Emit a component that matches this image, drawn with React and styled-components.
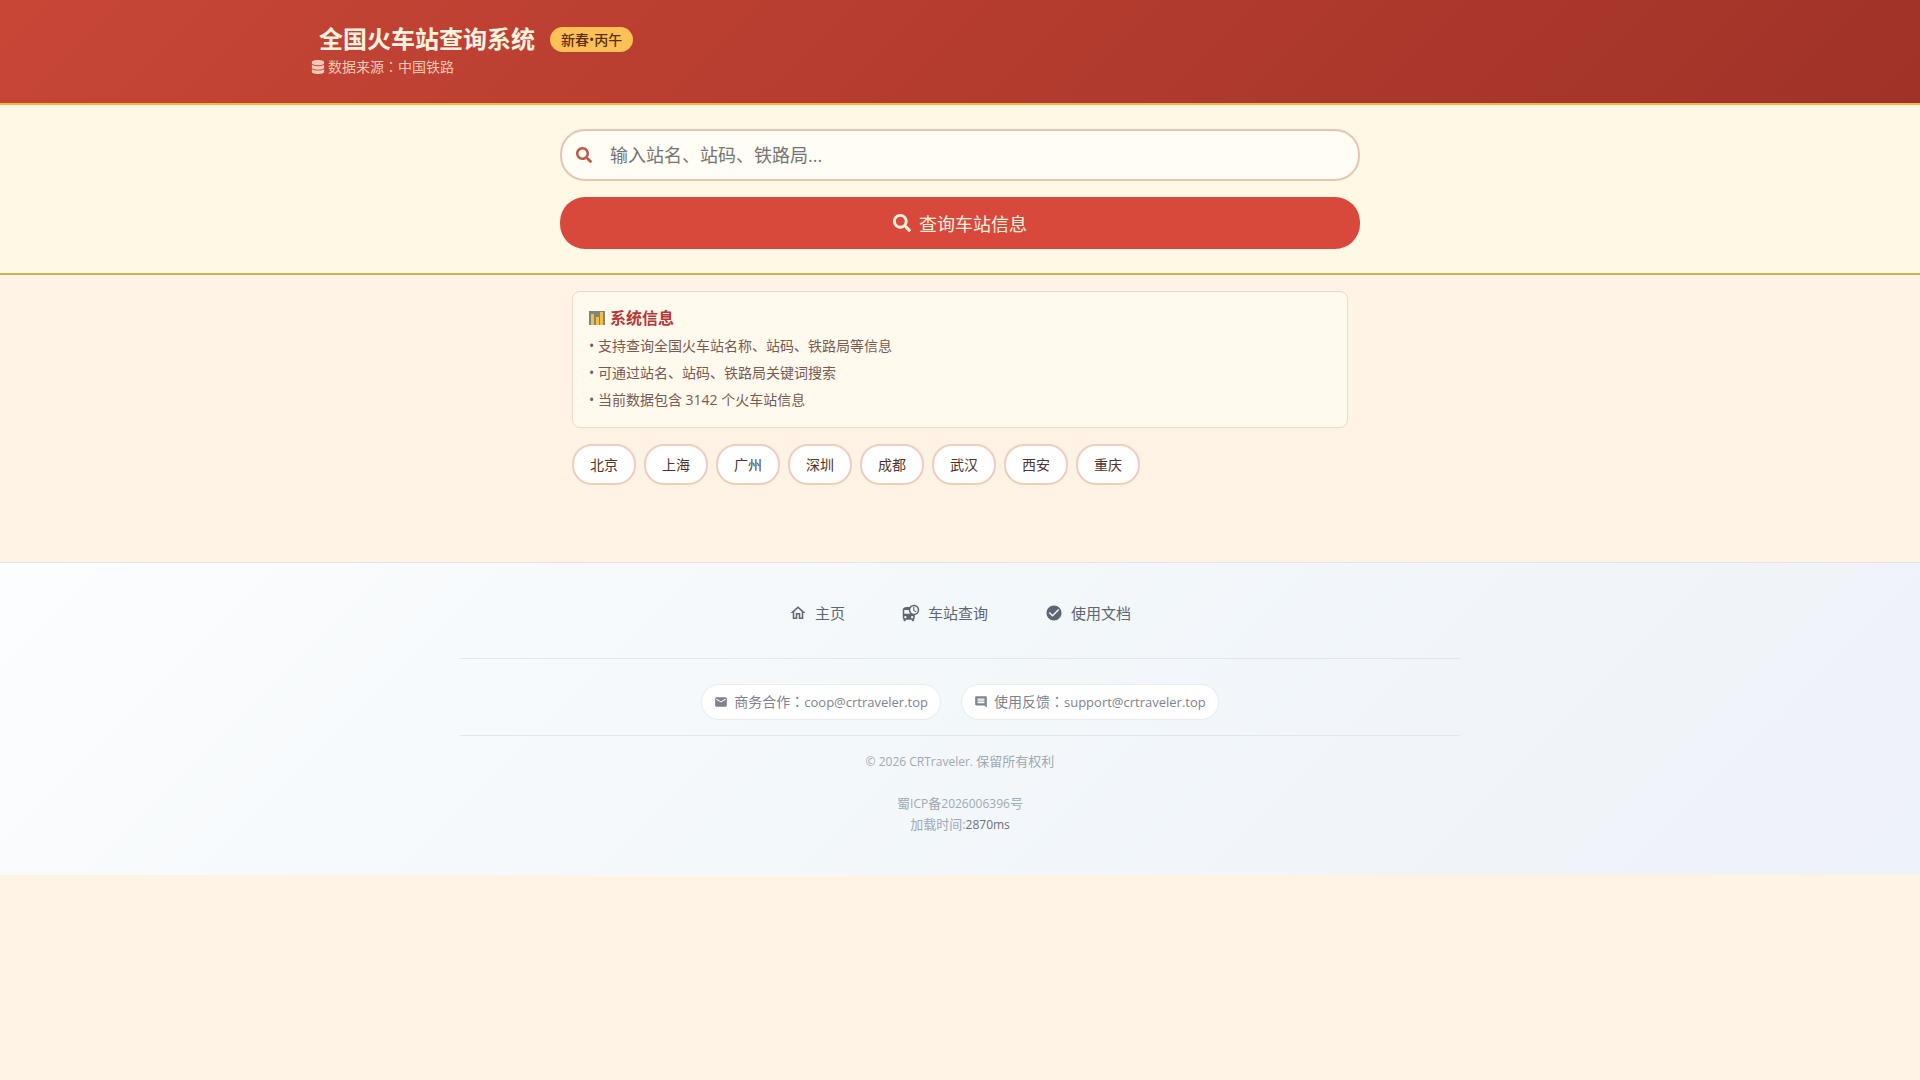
import React from "react";
import styled, { createGlobalStyle } from "styled-components";
import { FaDatabase, FaSearch } from "react-icons/fa";
import {
  MdCheckCircle,
  MdDepartureBoard,
  MdEmail,
  MdInsertComment,
  MdOutlineHome,
} from "react-icons/md";

const cities = ["北京", "上海", "广州", "深圳", "成都", "武汉", "西安", "重庆"];

const tips = [
  "支持查询全国火车站名称、站码、铁路局等信息",
  "可通过站名、站码、铁路局关键词搜索",
  "当前数据包含 3142 个火车站信息",
];

const links = [
  { label: "主页", icon: MdOutlineHome },
  { label: "车站查询", icon: MdDepartureBoard },
  { label: "使用文档", icon: MdCheckCircle },
];

const contacts = [
  { label: "商务合作", mail: "coop@crtraveler.top", icon: MdEmail },
  { label: "使用反馈", mail: "support@crtraveler.top", icon: MdInsertComment },
];

function ChartIcon() {
  return (
    <svg width="16" height="14" viewBox="0 0 16 14" aria-hidden="true">
      <rect width="16" height="14" fill="#84857a" />
      <rect x="2" y="3" width="3" height="11" fill="#f0c040" />
      <rect x="7" y="6" width="3" height="8" fill="#f0c040" />
      <rect x="11" y="1" width="3" height="13" fill="#f0c040" />
    </svg>
  );
}

function App() {
  return (
    <>
      <GlobalStyle />
      <Header>
        <HeaderInner>
          <TitleRow>
            <Title>全国火车站查询系统</Title>
            <Badge>新春•丙午</Badge>
          </TitleRow>
          <Source>
            <FaDatabase size={14} />
            <span>
              数据来源<Colon>：</Colon>中国铁路
            </span>
          </Source>
        </HeaderInner>
      </Header>

      <SearchSection>
        <SearchForm onSubmit={(e) => e.preventDefault()}>
          <SearchBox>
            <FaSearch size={16} />
            <SearchInput
              type="text"
              aria-label="车站搜索"
              placeholder="输入站名、站码、铁路局..."
            />
          </SearchBox>
          <SearchButton type="submit">
            <FaSearch size={18} />
            查询车站信息
          </SearchButton>
        </SearchForm>
      </SearchSection>

      <Main>
        <InfoCard>
          <InfoTitle>
            <ChartIcon />
            系统信息
          </InfoTitle>
          {tips.map((tip) => (
            <InfoLine key={tip}>• {tip}</InfoLine>
          ))}
        </InfoCard>
        <CityList>
          {cities.map((city) => (
            <CityButton key={city} type="button">
              {city}
            </CityButton>
          ))}
        </CityList>
      </Main>

      <Footer>
        <FooterInner>
          <FooterNav>
            {links.map(({ label, icon: Icon }) => (
              <NavLink key={label} href="#">
                <Icon size={18} />
                {label}
              </NavLink>
            ))}
          </FooterNav>
          <Contacts>
            {contacts.map(({ label, mail, icon: Icon }) => (
              <ContactLink key={mail} href={`mailto:${mail}`}>
                <Icon size={14} />
                <span>
                  {label}
                  <Colon>：</Colon>
                  <Mail>{mail}</Mail>
                </span>
              </ContactLink>
            ))}
          </Contacts>
          <Legal>
            <LegalLine>
              <Latin>© 2026 CRTraveler.</Latin> 保留所有权利
            </LegalLine>
            <LegalGroup>
              <IcpLink href="#">
                蜀<Latin>ICP</Latin>备<Latin>2026006396</Latin>号
              </IcpLink>
              <LegalLine>
                加载时间:<LoadTime>2870ms</LoadTime>
              </LegalLine>
            </LegalGroup>
          </Legal>
        </FooterInner>
      </Footer>
    </>
  );
}

const GlobalStyle = createGlobalStyle`
  * {
    box-sizing: border-box;
    margin: 0;
    padding: 0;
  }

  body {
    background: #fff3e5;
    color: #4e342e;
    font-family: "Open Sans", "Noto Sans CJK SC", sans-serif;
  }

  button,
  input {
    font-family: inherit;
  }

  svg {
    flex-shrink: 0;
  }
`;

/* full-width colon sits in the middle of its box */
const Colon = styled.span`
  font-family: "Noto Sans CJK TC", sans-serif;
  line-height: 1;
`;

const Header = styled.header`
  background: linear-gradient(135deg, #c84636 0%, #a03228 100%);
  border-bottom: 2px solid #f5b942;
  padding: 23px 0 24px;
`;

const HeaderInner = styled.div`
  max-width: 1320px;
  margin: 0 auto;
  padding: 0 11px;
`;

const TitleRow = styled.div`
  display: flex;
  align-items: center;
  gap: 15px;
  padding: 0 8px;
`;

const Title = styled.h1`
  color: #fff3e0;
  font-size: 24px;
  font-weight: 700;
  line-height: 32px;
`;

const Badge = styled.span`
  padding: 0 11px;
  border-radius: 13px;
  background: #fbc056;
  color: #5d2e0c;
  font-size: 14px;
  font-weight: 500;
  line-height: 25px;
`;

const Source = styled.p`
  display: flex;
  align-items: center;
  gap: 3px;
  color: #f3c8b4;
  font-size: 14px;
  line-height: 24px;
`;

const SearchSection = styled.section`
  background: #fff8e5;
  border-bottom: 2px solid #d0b04c;
  padding: 24px 12px;
`;

const SearchForm = styled.form`
  display: flex;
  flex-direction: column;
  gap: 16px;
  max-width: 800px;
  margin: 0 auto;
`;

const SearchBox = styled.div`
  display: flex;
  align-items: center;
  gap: 18px;
  height: 52px;
  padding: 0 14px;
  background: #fffdf4;
  border: 2px solid #e6c5b2;
  border-radius: 25px;
  color: #bb5a48;
`;

const SearchInput = styled.input`
  flex: 1;
  border: none;
  outline: none;
  background: transparent;
  color: #4e342e;
  font-size: 18px;
  line-height: 28px;

  &::placeholder {
    color: #757575;
  }
`;

const SearchButton = styled.button`
  display: flex;
  align-items: center;
  justify-content: center;
  gap: 8px;
  height: 52px;
  border: none;
  border-radius: 25px;
  background: #d9493b;
  color: #fff3e0;
  font-size: 18px;
  cursor: pointer;
`;

const Main = styled.main`
  max-width: 800px;
  margin: 0 auto;
  padding: 16px 12px 77px;
`;

const InfoCard = styled.section`
  padding: 16px;
  background: #fff9ee;
  border: 1px solid #f0d8c8;
  border-radius: 8px;
`;

const InfoTitle = styled.h2`
  display: flex;
  align-items: center;
  gap: 5px;
  margin-bottom: 7px;
  color: #b5383a;
  font-size: 16px;
  font-weight: 600;
  line-height: 20px;
`;

const InfoLine = styled.p`
  color: #795b50;
  font-size: 14px;
  line-height: 22px;

  & + & {
    margin-top: 5px;
  }
`;

const CityList = styled.div`
  display: flex;
  flex-wrap: wrap;
  gap: 8px;
  margin-top: 16px;
`;

const CityButton = styled.button`
  padding: 8px 16px;
  background: #fff;
  border: 2px solid #efcdbd;
  border-radius: 20px;
  color: #4e342e;
  font-size: 14px;
  line-height: 21px;
  cursor: pointer;
`;

const Footer = styled.footer`
  background: linear-gradient(135deg, #fcfdfe 0%, #f3f8fb 45%, #eef2f9 100%);
  border-top: 1px solid #e6e2e8;
  padding: 30px 20px 40px;
`;

const FooterInner = styled.div`
  max-width: 1000px;
  margin: 0 auto;
`;

const FooterNav = styled.nav`
  display: flex;
  justify-content: center;
  gap: 31px;
  padding-bottom: 25px;
  border-bottom: 1px solid #e1e7ec;
`;

const NavLink = styled.a`
  display: flex;
  align-items: center;
  gap: 8px;
  padding: 8px 13px;
  color: #5f6673;
  font-size: 15px;
  line-height: 24px;
  text-decoration: none;
`;

const Contacts = styled.div`
  display: flex;
  flex-wrap: wrap;
  justify-content: center;
  gap: 20px;
  padding: 25px 0 15px;
  border-bottom: 1px solid #e1e7ec;
`;

const ContactLink = styled.a`
  display: flex;
  align-items: center;
  gap: 6px;
  padding: 6px 12px;
  background: #fff;
  border: 1px solid #e6ebf0;
  border-radius: 18px;
  color: #7d838f;
  font-size: 14px;
  line-height: 22px;
  text-decoration: none;
`;

const Mail = styled.span`
  font-size: 13px;
  line-height: 1;
`;

const Legal = styled.div`
  padding-top: 15px;
  color: #a0a9b4;
  font-size: 13px;
  line-height: 21px;
  text-align: center;
`;

const LegalLine = styled.p`
  color: inherit;
`;

const LegalGroup = styled.div`
  margin-top: 21px;
`;

const IcpLink = styled.a`
  color: inherit;
  text-decoration: none;
`;

const Latin = styled.span`
  font-size: 12px;
  line-height: 1;
`;

const LoadTime = styled(Latin)`
  color: #6b7280;
`;

export default App;
